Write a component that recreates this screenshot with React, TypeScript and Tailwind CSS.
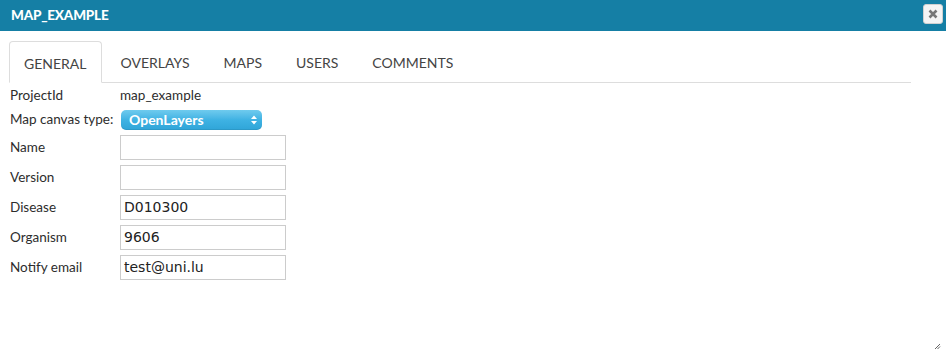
const tabs = ["GENERAL", "OVERLAYS", "MAPS", "USERS", "COMMENTS"];

const fields = [
  { label: "Name", value: "" },
  { label: "Version", value: "" },
  { label: "Disease", value: "D010300" },
  { label: "Organism", value: "9606" },
  { label: "Notify email", value: "test@uni.lu" },
];

export default function App() {
  return (
    <div className="relative w-[946px] h-[352px] bg-white font-['Lato','Noto_Sans',sans-serif] text-[#2d2d2d]">
      {/* title bar */}
      <div className="flex items-center justify-between h-[31px] bg-[#157fa5] pl-[11px] pr-[3px]">
        <span className="text-white text-[13.5px] font-black tracking-[-0.2px]">MAP_EXAMPLE</span>
        <button className="flex items-center justify-center w-[20px] h-[20px] mt-[-4px] rounded-[3px] bg-[#f4f4f4] border border-[#d0d0d0]">
          <svg width="10" height="10" viewBox="0 0 10 10">
            <path d="M1.5 1.5 L8.5 8.5 M8.5 1.5 L1.5 8.5" stroke="#777" strokeWidth="2.6" />
          </svg>
        </button>
      </div>

      <div className="pl-[9px] pr-[35px] pt-[10px]">
        {/* tabs */}
        <div className="flex gap-[4px] border-b border-[#dddddd] h-[42px]">
          {tabs.map((t, i) => (
            <div
              key={t}
              className={
                i === 0
                  ? "flex items-center px-[14px] pt-[2px] text-[14px] text-[#444] border border-[#dddddd] border-b-white rounded-t-[4px] mb-[-1px] bg-white"
                  : "flex items-center px-[15px] pt-[2px] text-[14px] text-[#444]"
              }
            >
              {t}
            </div>
          ))}
        </div>

        {/* form */}
        <div className="pl-[1px] text-[13.5px]">
          <div className="flex items-center h-[25px]">
            <span className="w-[110px]">ProjectId</span>
            <span>map_example</span>
          </div>
          <div className="flex items-center h-[23px]">
            <span className="w-[110px] whitespace-nowrap">Map canvas type:</span>
            <div className="flex items-center justify-between w-[141px] h-[20px] ml-[1px] rounded-[5px] bg-gradient-to-b from-[#6fcbee] via-[#3eb2e3] to-[#2fa5d8] pl-[8px] pr-[5px] shadow-[inset_0_-1px_0_rgba(0,0,0,0.08)]">
              <span className="text-white font-bold text-[14px]">OpenLayers</span>
              <svg width="6" height="10" viewBox="0 0 6 10">
                <path d="M0 4 L3 0.5 L6 4 Z M0 6 L3 9.5 L6 6 Z" fill="#fff" />
              </svg>
            </div>
          </div>
          <div className="flex flex-col gap-[5px] mt-[4px]">
            {fields.map((f) => (
              <div key={f.label} className="flex items-center">
                <span className="w-[110px]">{f.label}</span>
                <div className="w-[166px] h-[25px] border border-[#cccccc] px-[3px] flex items-center font-['DejaVu_Sans',sans-serif] text-[14px] text-[#222]">
                  {f.value}
                </div>
              </div>
            ))}
          </div>
        </div>
      </div>

      {/* resize grip */}
      <svg className="absolute right-[5px] bottom-[2px]" width="7" height="7" viewBox="0 0 7 7">
        <path d="M6 1 L1 6 M6 3.5 L3.5 6" stroke="#666" strokeWidth="1" />
      </svg>
    </div>
  );
}
